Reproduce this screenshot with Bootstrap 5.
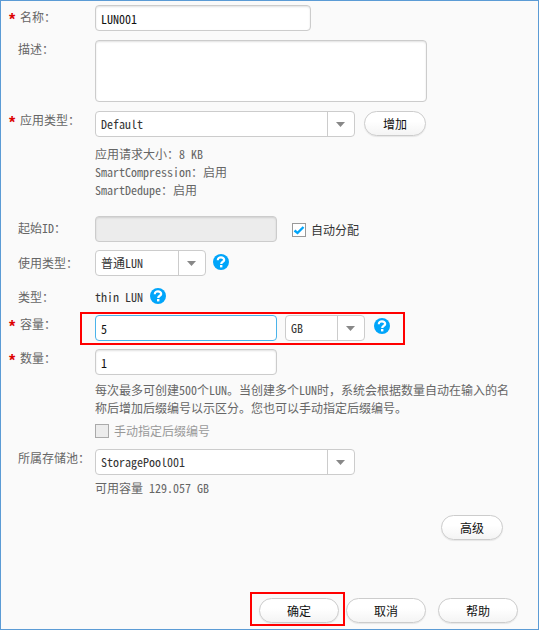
<!DOCTYPE html>
<html lang="zh-CN">
<head>
<meta charset="utf-8">
<meta name="viewport" content="width=device-width, initial-scale=1">
<title>创建LUN</title>
<link rel="stylesheet" href="https://cdn.jsdelivr.net/npm/bootstrap@5.3.0/dist/css/bootstrap.min.css">
<style>
body, .form-control, .form-select, .btn {
  font-family: "Noto Sans Mono CJK SC", "Noto Sans CJK SC", monospace;
  font-size: 12px;
  line-height: 18px;
}
body { background: #fafafa; color: #666; }
.dialog-frame { border: 1px solid #5b9bd5; padding-top: 4px; }
.field-row { display: flex; align-items: flex-start; margin-bottom: 8px; }
.field-row.roomy { margin-bottom: 9px; }
.field-label { flex: 0 0 94px; padding-left: 17px; white-space: nowrap; }
.field-label.low { padding-top: 3px; }
.field-label.req { display: flex; padding-left: 8px; }
.star { width: 11px; padding-top: 3px; color: #d00; font-family: "Liberation Sans", sans-serif; font-size: 16px; font-weight: 700; line-height: 18px; height: 18px; }
.field-body { flex: 1 1 0; min-width: 0; padding-right: 24px; }
.form-control, .form-select {
  height: 26px; padding: 3px 5px; color: #333;
  border: 1px solid #ccc; border-radius: 4px; background-color: #fff;
}
.form-control { color: #111; box-shadow: inset 0 1px 2px rgba(0,0,0,.12); }
.form-control:disabled { background: #ececec; }
.form-control.active-field { border-color: #4ab3ea; box-shadow: none; }
textarea.form-control { height: 62px; resize: none; }
.form-select {
  padding-right: 30px;
  background-image: url("data:image/svg+xml,%3Csvg xmlns='http://www.w3.org/2000/svg' width='27' height='24'%3E%3Cpath d='M.5 0V24' stroke='%23ccc'/%3E%3Cpath d='M9 10H18L13.500 15Z' fill='%23888'/%3E%3C/svg%3E");
  background-position: right 0 top 0;
  background-size: 27px 24px;
}
.w-name { width: 216px; }
.w-area { width: 332px; }
.w-wide { width: 260px; }
.w-mid { width: 182px; }
.w-use { width: 111px; }
.w-unit { width: 80px; }
.pill {
  height: 25px; width: 80px; padding: 3px 0 2px; color: #111;
  border: 1px solid #ccc; border-radius: 13px;
  background: linear-gradient(#fff 40%, #f4f4f4);
  box-shadow: 0 1px 1px rgba(0,0,0,.08);
}
.pill.short { width: 62px; }
.gap-9 { gap: 9px; }
.form-check-input.tick { width: 14px; height: 14px; margin: 0; border: 1px solid #999; border-radius: 0; background-color: #fff; flex: none; }
.form-check-input.tick:checked {
  border-color: #999; background-color: #fff; background-size: 12px 12px;
  background-image: url("data:image/svg+xml,%3Csvg xmlns='http://www.w3.org/2000/svg' viewBox='0 0 12 12'%3E%3Cpath d='M1.500 6.500L4.500 9L10.500 3' fill='none' stroke='%2300a5fa' stroke-width='2.400'/%3E%3C/svg%3E");
}
.form-check-input.tick:disabled { background-color: #ececec; opacity: 1; border-color: #aaa; }
.tick-row { display: flex; align-items: center; gap: 5px; }
.tick-row.after-field { margin: 2px 0 0 15px; }
.tick-row.below-note { margin-top: 5px; }
.muted-label { color: #999; }
.dark { color: #333; }
.help { display: block; align-self: flex-start; margin-left: 7px; padding: 0; border: 0; background: none; }
.help svg { display: block; }
.help.beside { margin-top: 4px; }
.capacity .help.beside { margin: 3px 0 0 9px; }
.note { margin-top: 6px; }
.outlined { position: relative; }
.outlined::after { content: ""; position: absolute; border: 2px solid #f00; pointer-events: none; }
.outlined.capacity::after { inset: -3px -15px -4px -15px; }
.outlined.confirm::after { inset: -6px -6px -3px -9px; }
.section-gap { margin-bottom: 17px; }
.extra-row { padding-right: 35px; margin-top: 18px; }
.footer-row { padding: 58px 20px 5px; }
.footer-row .outlined { margin-right: 7px; }
.footer-row .cancel { margin-right: 12px; }
</style>
<script src="https://cdn.jsdelivr.net/npm/bootstrap@5.3.0/dist/js/bootstrap.bundle.min.js"></script>
</head>
<body>
<svg class="d-none">
  <symbol id="question" viewBox="0 0 16 16">
    <circle cx="8" cy="8" r="8" fill="#00a5fa"/>
    <path d="M4.800 6.200C4.800 4.200 6.200 3.300 8 3.300S11.200 4.300 11.200 6C11.200 7.900 8.200 7.700 8.200 10" fill="none" stroke="#fff" stroke-width="2.200"/>
    <rect x="7" y="11" width="2.400" height="2.400" fill="#fff"/>
  </symbol>
</svg>
<form class="dialog-frame min-vh-100" onsubmit="return false">
  <div class="field-row roomy">
    <label class="field-label req low" for="name"><span class="star">*</span>名称：</label>
    <div class="field-body"><input id="name" class="form-control w-name" value="LUN001"></div>
  </div>
  <div class="field-row roomy">
    <label class="field-label" for="desc">描述：</label>
    <div class="field-body"><textarea id="desc" class="form-control w-area d-block"></textarea></div>
  </div>
  <div class="field-row section-gap">
    <label class="field-label req" for="app"><span class="star">*</span>应用类型：</label>
    <div class="field-body">
      <div class="d-flex gap-9 mb-2">
        <select id="app" class="form-select w-wide"><option>Default</option></select>
        <button type="button" class="btn pill short">增加</button>
      </div>
      <div>应用请求大小：8 KB</div>
      <div>SmartCompression：启用</div>
      <div>SmartDedupe：启用</div>
    </div>
  </div>
  <div class="field-row">
    <label class="field-label low" for="startid">起始ID：</label>
    <div class="field-body d-flex align-items-center">
      <input id="startid" class="form-control w-mid" disabled>
      <div class="tick-row after-field">
        <input id="auto" type="checkbox" class="form-check-input tick" checked>
        <label class="dark" for="auto">自动分配</label>
      </div>
    </div>
  </div>
  <div class="field-row">
    <label class="field-label low pt-1" for="use">使用类型：</label>
    <div class="field-body d-flex">
      <select id="use" class="form-select w-use"><option>普通LUN</option></select>
      <button type="button" class="help beside" aria-label="帮助"><svg width="16" height="16"><use href="#question"/></svg></button>
    </div>
  </div>
  <div class="field-row pt-1 roomy">
    <div class="field-label">类型：</div>
    <div class="field-body d-flex dark">thin LUN
      <button type="button" class="help" aria-label="帮助"><svg width="16" height="16"><use href="#question"/></svg></button>
    </div>
  </div>
  <div class="field-row">
    <label class="field-label req" for="cap"><span class="star">*</span>容量：</label>
    <div class="d-flex outlined capacity">
      <input id="cap" class="form-control active-field w-mid" value="5">
      <select class="form-select w-unit ms-2" aria-label="单位"><option>GB</option></select>
      <button type="button" class="help beside" aria-label="帮助"><svg width="16" height="16"><use href="#question"/></svg></button>
    </div>
  </div>
  <div class="field-row roomy">
    <label class="field-label req" for="count"><span class="star">*</span>数量：</label>
    <div class="field-body">
      <input id="count" class="form-control w-mid" value="1">
      <div class="note">每次最多可创建500个LUN。当创建多个LUN时，系统会根据数量自动在输入的名称后增加后缀编号以示区分。您也可以手动指定后缀编号。</div>
      <div class="tick-row below-note">
        <input id="manual" type="checkbox" class="form-check-input tick" disabled>
        <label class="muted-label" for="manual">手动指定后缀编号</label>
      </div>
    </div>
  </div>
  <div class="field-row mb-0">
    <label class="field-label" for="pool">所属存储池：</label>
    <div class="field-body">
      <select id="pool" class="form-select w-wide"><option>StoragePool001</option></select>
      <div class="mt-1">可用容量 129.057 GB</div>
    </div>
  </div>
  <div class="extra-row d-flex justify-content-end"><button type="button" class="btn pill short">高级</button></div>
  <div class="footer-row d-flex justify-content-end">
    <div class="outlined confirm"><button type="submit" class="btn pill d-block">确定</button></div>
    <button type="button" class="btn pill cancel">取消</button>
    <button type="button" class="btn pill">帮助</button>
  </div>
</form>
</body>
</html>
